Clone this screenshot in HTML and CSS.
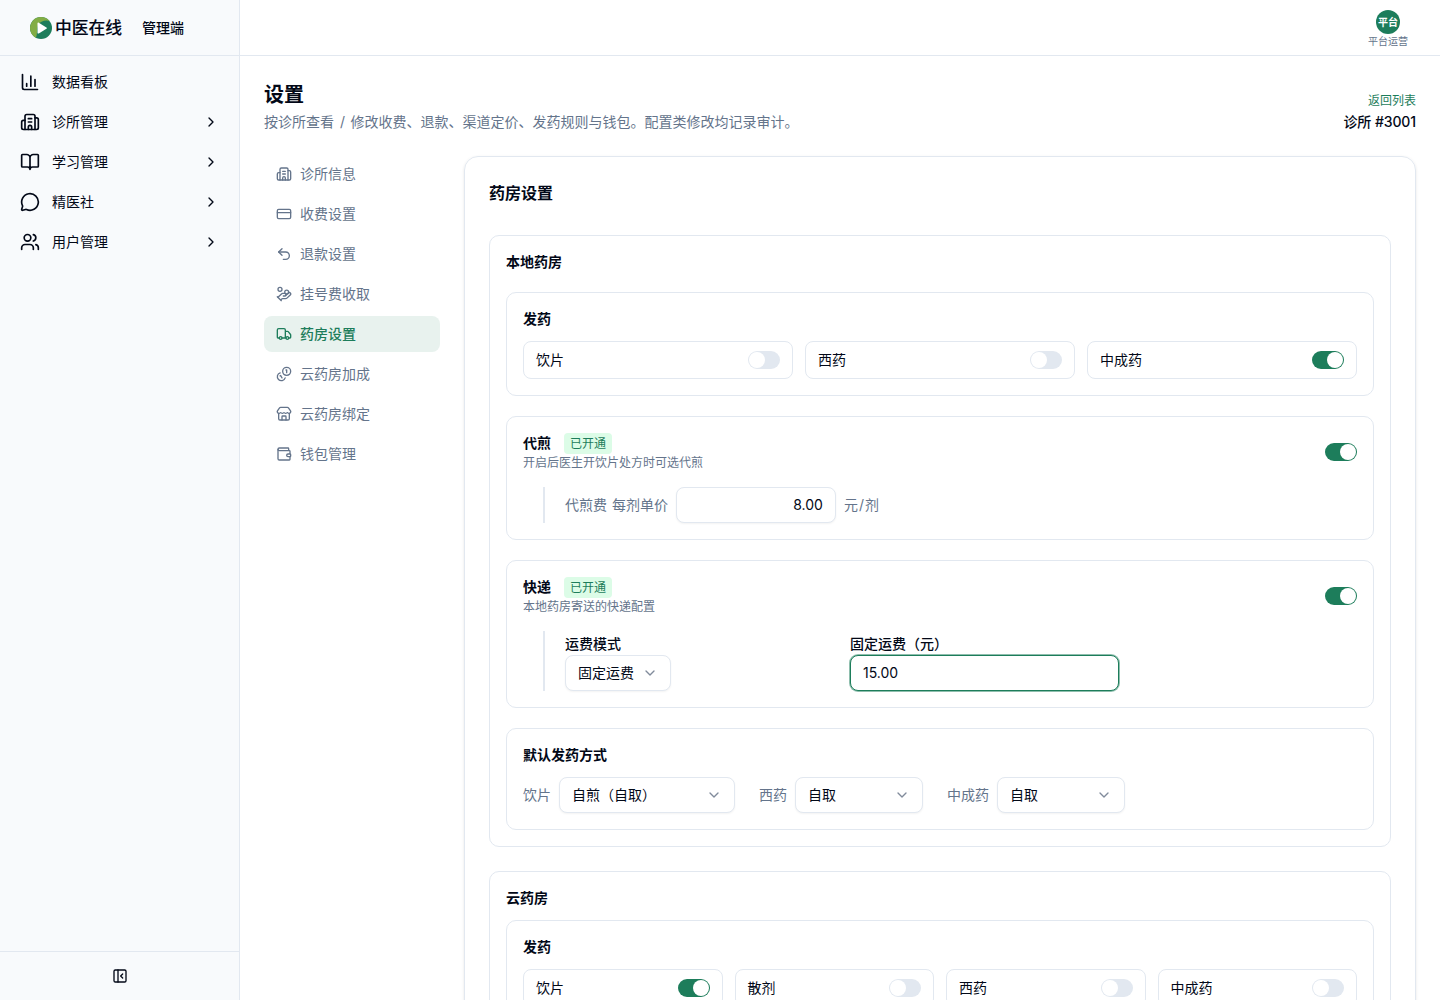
FILE: index.html
```html
<!DOCTYPE html>
<html lang="zh-CN">
<head>
    <meta charset="UTF-8">
    <meta name="viewport" content="width=device-width, initial-scale=1.0">
    <title>药房设置 - 中医在线</title>
    <link rel="stylesheet" href="styles.css">
</head>
<body>
<svg class="sprite" xmlns="http://www.w3.org/2000/svg">
    <symbol id="clinic" viewBox="0 0 24 24">
        <path d="M10 12h4M10 8h4M14 21v-3a2 2 0 0 0-4 0v3"/>
        <path d="M6 10H4a2 2 0 0 0-2 2v7a2 2 0 0 0 2 2h16a2 2 0 0 0 2-2V9a2 2 0 0 0-2-2h-2"/>
        <path d="M6 21V5a2 2 0 0 1 2-2h8a2 2 0 0 1 2 2v16"/>
    </symbol>
    <symbol id="right" viewBox="0 0 24 24"><path d="m9 18 6-6-6-6"/></symbol>
    <symbol id="down" viewBox="0 0 24 24"><path d="m6 9 6 6 6-6"/></symbol>
</svg>
<div class="layout">
    <aside class="sidebar">
        <div class="brand">
            <svg class="logo" viewBox="0 0 22 22">
                <circle cx="11" cy="11" r="11" fill="#1d7d5b"/>
                <path d="M6 20.800A11 11 0 1 1 19.500 4C16 2.500 10 4 8 8c-1.500 4-.5 9-2 12.800z" fill="#82ad45"/>
                <path d="M7.500 6.500v9.200c0 .8.600 1.100 1.300.7l7.600-4.600c.6-.4.6-1 0-1.400L8.800 5.800c-.7-.4-1.300-.1-1.300.7z" fill="#fff"/>
            </svg>
            <span class="brand-name">中医在线</span>
            <span class="brand-sub">管理端</span>
        </div>
        <nav class="menu">
            <a class="menu-item">
                <svg class="icon" viewBox="0 0 24 24"><path d="M3 3v16a2 2 0 0 0 2 2h16M18 17V9M13 17V5M8 17v-3"/></svg>
                <span>数据看板</span>
            </a>
            <a class="menu-item">
                <svg class="icon"><use href="#clinic"/></svg>
                <span>诊所管理</span>
                <svg class="icon arrow"><use href="#right"/></svg>
            </a>
            <a class="menu-item">
                <svg class="icon" viewBox="0 0 24 24"><path d="M12 7v14M3 18a1 1 0 0 1-1-1V4a1 1 0 0 1 1-1h5a4 4 0 0 1 4 4 4 4 0 0 1 4-4h5a1 1 0 0 1 1 1v13a1 1 0 0 1-1 1h-6a3 3 0 0 0-3 3 3 3 0 0 0-3-3z"/></svg>
                <span>学习管理</span>
                <svg class="icon arrow"><use href="#right"/></svg>
            </a>
            <a class="menu-item">
                <svg class="icon" viewBox="0 0 24 24"><path d="M2.992 16.342a2 2 0 0 1 .094 1.167l-1.065 3.290a1 1 0 0 0 1.236 1.168l3.413-.998a2 2 0 0 1 1.099.092 10 10 0 1 0-4.777-4.719"/></svg>
                <span>精医社</span>
                <svg class="icon arrow"><use href="#right"/></svg>
            </a>
            <a class="menu-item">
                <svg class="icon" viewBox="0 0 24 24"><path d="M16 21v-2a4 4 0 0 0-4-4H6a4 4 0 0 0-4 4v2M16 3.128a4 4 0 0 1 0 7.744M22 21v-2a4 4 0 0 0-3-3.870"/><circle cx="9" cy="7" r="4"/></svg>
                <span>用户管理</span>
                <svg class="icon arrow"><use href="#right"/></svg>
            </a>
        </nav>
        <div class="collapse">
            <svg class="icon" viewBox="0 0 24 24"><rect x="3" y="3" width="18" height="18" rx="2"/><path d="M9 3v18M16 15l-3-3 3-3"/></svg>
        </div>
    </aside>

    <div class="page">
        <header class="topbar">
            <div class="account">
                <span class="avatar">平台</span>
                <span class="account-name">平台运营</span>
            </div>
        </header>
        <main class="content">
            <div class="page-head">
                <div>
                    <h1>设置</h1>
                    <p>按诊所查看 <span class="slash">/</span> 修改收费、退款、渠道定价、发药规则与钱包。配置类修改均记录审计。</p>
                </div>
                <div class="page-side">
                    <a class="back">返回列表</a>
                    <div class="clinic-id">诊所 #3001</div>
                </div>
            </div>
            <div class="settings">
                <nav class="tabs">
                    <a class="tab"><svg class="icon"><use href="#clinic"/></svg>诊所信息</a>
                    <a class="tab"><svg class="icon" viewBox="0 0 24 24"><rect x="2" y="5" width="20" height="14" rx="2"/><path d="M2 10h20"/></svg>收费设置</a>
                    <a class="tab"><svg class="icon" viewBox="0 0 24 24"><path d="M9 14 4 9l5-5"/><path d="M4 9h10.500a5.500 5.500 0 0 1 0 11H11"/></svg>退款设置</a>
                    <a class="tab"><svg class="icon" viewBox="0 0 24 24"><path d="M11 15h2a2 2 0 1 0 0-4h-3c-.6 0-1.100.2-1.400.6L3 17"/><path d="m7 21 1.600-1.400c.3-.4.8-.6 1.400-.6h4c1.100 0 2.100-.4 2.800-1.200l4.600-4.400a2 2 0 0 0-2.750-2.910l-4.200 3.900M2 16l6 6"/><circle cx="16" cy="9" r="2.900"/><circle cx="6" cy="5" r="3"/></svg>挂号费收取</a>
                    <a class="tab active"><svg class="icon" viewBox="0 0 24 24"><path d="M14 18V6a2 2 0 0 0-2-2H4a2 2 0 0 0-2 2v11a1 1 0 0 0 1 1h2M15 18H9M19 18h2a1 1 0 0 0 1-1v-3.650a1 1 0 0 0-.22-.624l-3.480-4.350A1 1 0 0 0 17.520 8H14"/><circle cx="17" cy="18" r="2"/><circle cx="7" cy="18" r="2"/></svg>药房设置</a>
                    <a class="tab"><svg class="icon" viewBox="0 0 24 24"><path d="M13.744 17.736a6 6 0 1 1-7.480-7.480M15 6h1v4M6.134 14.768l.866-.5 2 3.464"/><circle cx="16" cy="8" r="6"/></svg>云药房加成</a>
                    <a class="tab"><svg class="icon" viewBox="0 0 24 24"><path d="M15 21v-5a1 1 0 0 0-1-1h-4a1 1 0 0 0-1 1v5"/><path d="M17.774 10.310a1.120 1.120 0 0 0-1.549 0 2.500 2.500 0 0 1-3.451 0 1.120 1.120 0 0 0-1.548 0 2.500 2.500 0 0 1-3.452 0 1.120 1.120 0 0 0-1.549 0 2.500 2.500 0 0 1-3.770-3.248l2.889-4.184A2 2 0 0 1 7 2h10a2 2 0 0 1 1.653.873l2.895 4.192a2.500 2.500 0 0 1-3.774 3.244"/><path d="M4 10.950V19a2 2 0 0 0 2 2h12a2 2 0 0 0 2-2v-8.050"/></svg>云药房绑定</a>
                    <a class="tab"><svg class="icon" viewBox="0 0 24 24"><path d="M19 7V4a1 1 0 0 0-1-1H5a2 2 0 0 0 0 4h15a1 1 0 0 1 1 1v4h-3a2 2 0 0 0 0 4h3a1 1 0 0 0 1-1v-2a1 1 0 0 0-1-1"/><path d="M3 5v14a2 2 0 0 0 2 2h15a1 1 0 0 0 1-1v-4"/></svg>钱包管理</a>
                </nav>

                <div class="card">
                    <h2>药房设置</h2>

                    <section class="section">
                        <h3>本地药房</h3>
                        <div class="box">
                            <h4>发药</h4>
                            <div class="options">
                                <div class="option">饮片<span class="switch"></span></div>
                                <div class="option">西药<span class="switch"></span></div>
                                <div class="option">中成药<span class="switch on"></span></div>
                            </div>
                        </div>
                        <div class="box">
                            <div class="box-head">
                                <div>
                                    <div class="box-title"><h4>代煎</h4><span class="badge">已开通</span></div>
                                    <p class="hint">开启后医生开饮片处方时可选代煎</p>
                                </div>
                                <span class="switch on"></span>
                            </div>
                            <div class="detail fee">
                                <span class="fee-name">代煎费 每剂单价</span>
                                <input class="input price" type="text" value="8.00">
                                <span>元<span class="slash">/</span>剂</span>
                            </div>
                        </div>
                        <div class="box">
                            <div class="box-head">
                                <div>
                                    <div class="box-title"><h4>快递</h4><span class="badge">已开通</span></div>
                                    <p class="hint">本地药房寄送的快递配置</p>
                                </div>
                                <span class="switch on"></span>
                            </div>
                            <div class="detail shipping">
                                <div>
                                    <div class="label">运费模式</div>
                                    <div class="select mode">固定运费<svg class="icon"><use href="#down"/></svg></div>
                                </div>
                                <div>
                                    <div class="label">固定运费（元）</div>
                                    <input class="input focused" type="text" value="15.00">
                                </div>
                            </div>
                        </div>
                        <div class="box">
                            <h4>默认发药方式</h4>
                            <div class="defaults">
                                <div class="field"><span>饮片</span><div class="select wide">自煎（自取）<svg class="icon"><use href="#down"/></svg></div></div>
                                <div class="field"><span>西药</span><div class="select">自取<svg class="icon"><use href="#down"/></svg></div></div>
                                <div class="field"><span>中成药</span><div class="select">自取<svg class="icon"><use href="#down"/></svg></div></div>
                            </div>
                        </div>
                    </section>

                    <section class="section cloud">
                        <h3>云药房</h3>
                        <div class="box">
                            <h4>发药</h4>
                            <div class="options four">
                                <div class="option">饮片<span class="switch on"></span></div>
                                <div class="option">散剂<span class="switch"></span></div>
                                <div class="option">西药<span class="switch"></span></div>
                                <div class="option">中成药<span class="switch"></span></div>
                            </div>
                        </div>
                    </section>
                </div>
            </div>
        </main>
    </div>
</div>
</body>
</html>
```
FILE: styles.css
```css
* {
    box-sizing: border-box;
}
body {
    margin: 0;
    font-family: Inter, "Noto Sans CJK SC", sans-serif;
    font-size: 14px;
    line-height: 20px;
    color: #020817;
    background-color: #fff;
}
h1, h2, h3, h4, p {
    margin: 0;
}
.sprite {
    display: none;
}
.layout {
    display: flex;
    height: 100vh;
    overflow: hidden;
}
.icon {
    width: 16px;
    height: 16px;
    flex-shrink: 0;
    fill: none;
    stroke: currentColor;
    stroke-width: 2;
    stroke-linecap: round;
    stroke-linejoin: round;
}

/* sidebar */
.sidebar {
    display: flex;
    flex-direction: column;
    width: 240px;
    flex-shrink: 0;
    background-color: #f8fafc;
    border-right: 1px solid #e2e8f0;
}
.brand {
    display: flex;
    align-items: center;
    height: 56px;
    padding-left: 30px;
    border-bottom: 1px solid #e2e8f0;
}
.logo {
    width: 22px;
    height: 22px;
}
.brand-name {
    width: 68px;
    margin-left: 3px;
    font-size: 16.8px;
    font-weight: 500;
    -webkit-text-stroke: 0.1px #020817;
}
.brand-sub {
    margin-left: 19px;
    font-weight: 500;
}
.menu {
    flex: 1;
    padding: 6px 8px;
}
.menu-item {
    display: flex;
    align-items: center;
    gap: 12px;
    height: 40px;
    padding: 0 12px;
}
.menu-item .icon {
    width: 20px;
    height: 20px;
}
.menu-item .arrow {
    width: 16px;
    height: 16px;
    margin-left: auto;
}
.collapse {
    display: flex;
    align-items: center;
    justify-content: center;
    height: 49px;
    border-top: 1px solid #e2e8f0;
}

/* top bar */
.page {
    flex: 1;
    min-width: 0;
}
.topbar {
    display: flex;
    align-items: center;
    justify-content: flex-end;
    height: 56px;
    padding-right: 32px;
    border-bottom: 1px solid #e2e8f0;
}
.account {
    display: flex;
    flex-direction: column;
    align-items: center;
    padding-top: 4px;
}
.avatar {
    width: 24px;
    height: 24px;
    border-radius: 50%;
    background-color: #1d7d5b;
    color: #fff;
    font-size: 10px;
    font-weight: 600;
    line-height: 24px;
    text-align: center;
}
.account-name {
    color: #64748b;
    font-size: 10px;
    line-height: 15px;
}

/* page */
.content {
    padding: 25px 24px 24px;
}
.page-head {
    display: flex;
    justify-content: space-between;
    align-items: flex-end;
    margin-bottom: 24px;
}
.page-head h1 {
    margin-bottom: 3px;
    font-size: 20px;
    font-weight: 600;
    line-height: 28px;
}
.page-head p {
    color: #64748b;
}
.slash {
    padding: 0 1px;
}
.page-head .slash {
    padding: 0 1.5px 0 2px;
}
.page-side {
    display: flex;
    flex-direction: column;
    gap: 2px;
    text-align: right;
}
.back {
    color: #1d7d5b;
    font-size: 12px;
    line-height: 18px;
}
.clinic-id {
    font-weight: 500;
    letter-spacing: -0.1px;
}
.settings {
    display: flex;
    gap: 24px;
    align-items: flex-start;
}
.tabs {
    display: flex;
    flex-direction: column;
    gap: 4px;
    width: 176px;
    flex-shrink: 0;
}
.tab {
    display: flex;
    align-items: center;
    gap: 8px;
    height: 36px;
    padding: 0 12px;
    border-radius: 8px;
    color: #64748b;
}
.tab.active {
    background-color: #e8f2ee;
    color: #1d7d5b;
    font-weight: 500;
}
.card {
    flex: 1;
    min-width: 0;
    padding: 24px;
    border: 1px solid #e2e8f0;
    border-radius: 14px;
    box-shadow: 0 1px 3px rgba(0, 0, 0, 0.1);
}
.card h2 {
    margin-bottom: 30px;
    font-size: 16px;
    font-weight: 600;
    line-height: 24px;
}
.section {
    display: flex;
    flex-direction: column;
    gap: 20px;
    padding: 16px;
    border: 1px solid #e2e8f0;
    border-radius: 10px;
}
.section.cloud {
    gap: 12px;
    margin-top: 24px;
}
.section h3, .section h4 {
    font-size: 14px;
    font-weight: 600;
    line-height: 20px;
}
.box {
    padding: 16px;
    border: 1px solid #e2e8f0;
    border-radius: 10px;
}
.options {
    display: grid;
    grid-template-columns: repeat(3, 1fr);
    gap: 12px;
    margin-top: 12px;
}
.options.four {
    grid-template-columns: repeat(4, 1fr);
}
.option {
    display: flex;
    align-items: center;
    justify-content: space-between;
    height: 38px;
    padding: 0 12px;
    border: 1px solid #e2e8f0;
    border-radius: 8px;
}
.switch {
    display: flex;
    width: 32px;
    height: 18px;
    padding: 1px;
    border-radius: 9px;
    background-color: #e2e8f0;
}
.switch::before {
    content: "";
    width: 16px;
    height: 16px;
    border-radius: 50%;
    background-color: #fff;
}
.switch.on {
    justify-content: flex-end;
    background-color: #1d7d5b;
}
.box-head {
    display: flex;
    align-items: center;
    justify-content: space-between;
    height: 38px;
}
.box-title {
    display: flex;
    align-items: flex-start;
    gap: 13px;
    height: 21px;
}
.badge {
    padding: 0 6px;
    border-radius: 4px;
    background-color: #dcfce7;
    color: #1d7d5b;
    font-size: 12px;
    line-height: 21px;
}
.hint {
    height: 17px;
    color: #64748b;
    font-size: 12px;
    line-height: 18px;
}
.detail {
    display: flex;
    margin: 16px 0 0 20px;
    padding-left: 20px;
    border-left: 2px solid #e2e8f0;
}
.fee {
    align-items: center;
    gap: 8px;
    color: #64748b;
}
.fee-name {
    word-spacing: 1px;
}
.shipping {
    display: grid;
    grid-template-columns: 269px 269px;
    gap: 16px;
}
.label {
    height: 24px;
    font-weight: 500;
    line-height: 26px;
}
.input, .select {
    height: 36px;
    padding: 0 12px;
    border: 1px solid #e2e8f0;
    border-radius: 8px;
    background-color: #fff;
    box-shadow: 0 1px 2px rgba(0, 0, 0, 0.05);
    color: #020817;
    font: inherit;
}
.input {
    display: block;
    width: 100%;
    padding-bottom: 2px;
}
.input.price {
    width: 160px;
    text-align: right;
}
.input.focused {
    border-color: #1d7d5b;
    box-shadow: 0 0 0 1px rgba(29, 125, 91, 0.5);
}
.select {
    display: flex;
    align-items: center;
    justify-content: space-between;
    width: 128px;
}
.select .icon {
    color: #818b9b;
}
.select.wide {
    width: 176px;
}
.select.mode {
    width: 106px;
}
.defaults {
    display: flex;
    gap: 24px;
    margin-top: 12px;
}
.field {
    display: flex;
    align-items: center;
    gap: 8px;
    color: #64748b;
}
```
